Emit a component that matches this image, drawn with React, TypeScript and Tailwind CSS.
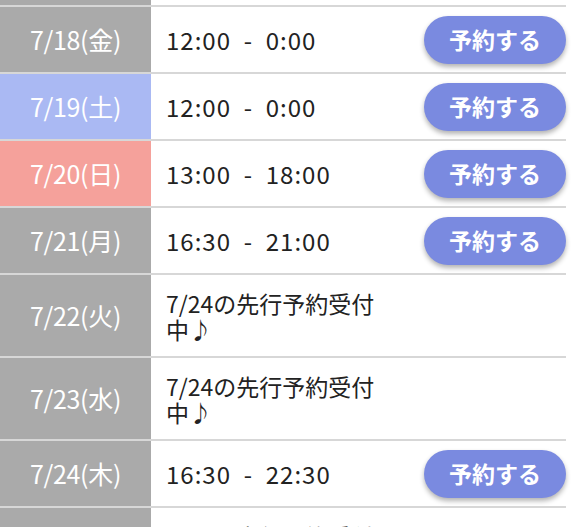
import React from "react";

type Row = {
  date: string;
  tone: "gray" | "blue" | "pink";
  text: string;
  reserve?: boolean;
  tall?: boolean;
};

const rows: Row[] = [
  { date: "7/18(金)", tone: "gray", text: "12:00  -  0:00", reserve: true },
  { date: "7/19(土)", tone: "blue", text: "12:00  -  0:00", reserve: true },
  { date: "7/20(日)", tone: "pink", text: "13:00  -  18:00", reserve: true },
  { date: "7/21(月)", tone: "gray", text: "16:30  -  21:00", reserve: true },
  { date: "7/22(火)", tone: "gray", text: "7/24の先行予約受付中♪", tall: true },
  { date: "7/23(水)", tone: "gray", text: "7/24の先行予約受付中♪", tall: true },
  { date: "7/24(木)", tone: "gray", text: "16:30  -  22:30", reserve: true },
  { date: "7/25(金)", tone: "gray", text: "7/24の先行予約受付中♪", tall: true },
];

const toneClass = {
  gray: "bg-[#aaaaaa]",
  blue: "bg-[#aab9f3]",
  pink: "bg-[#f5a19b]",
};

const font = { fontFamily: '"Noto Sans CJK JP", "Noto Sans", sans-serif' };

export default function App() {
  return (
    <div className="h-[527px] overflow-hidden bg-white" style={font}>
      <div className="w-[566px]">
        <div className="flex h-[7px] border-b-2 border-[#d7d7d7]">
          <div className="w-[151px] bg-[#aaaaaa]" />
          <div className="flex-1" />
        </div>
        {rows.map((r) => (
          <div
            key={r.date}
            className={`flex border-b-2 border-[#d7d7d7] ${r.tall ? "h-[83px]" : "h-[67px]"}`}
          >
            <div
              className={`w-[151px] shrink-0 flex items-center justify-center text-white text-[25px] tracking-[-0.3px] ${toneClass[r.tone]}`}
            >
              {r.date}
            </div>
            <div className="flex-1 flex items-center justify-between pl-[15px]">
              {r.tall ? (
                <div className="w-[230px] text-[23px] leading-[26px] text-[#222]">{r.text}</div>
              ) : (
                <div className="whitespace-pre text-[24px] tracking-[1px] text-[#222]">{r.text}</div>
              )}
              {r.reserve && (
                <button className="w-[142px] h-[48px] rounded-full bg-[#7a8ae0] text-white text-[23px] font-bold shadow-[0_3px_5px_rgba(0,0,0,0.3)]">
                  予約する
                </button>
              )}
            </div>
          </div>
        ))}
      </div>
    </div>
  );
}
